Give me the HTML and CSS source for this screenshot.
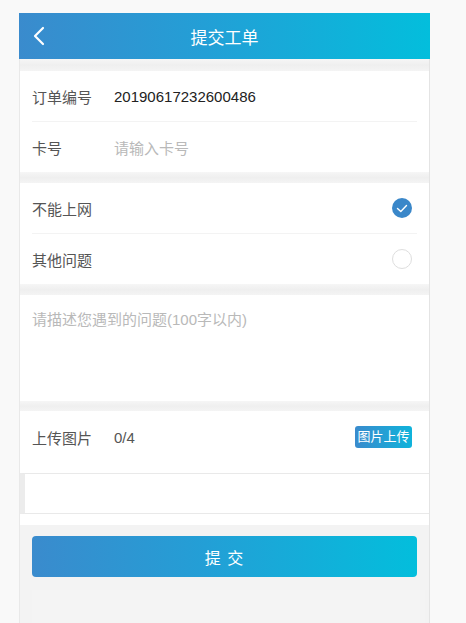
FILE: index.html
```html
<!DOCTYPE html>
<html lang="zh">
<head>
<meta charset="utf-8">
<title>提交工单</title>
<link rel="stylesheet" href="styles.css">
</head>
<body>
<div class="phone">
  <header class="topbar">
    <svg class="back" width="12" height="20" viewBox="0 0 12 20"><path d="M10 2 L2 10 L10 18" fill="none" stroke="#fff" stroke-width="2.2" stroke-linecap="round" stroke-linejoin="round"/></svg>
    <h1 class="title">提交工单</h1>
  </header>
  <div class="gap gap-first"></div>
  <section class="group">
    <div class="row">
      <span class="label">订单编号</span>
      <span class="value">20190617232600486</span>
    </div>
    <div class="row">
      <span class="label">卡号</span>
      <span class="placeholder">请输入卡号</span>
    </div>
  </section>
  <div class="gap"></div>
  <section class="group">
    <div class="row option">
      <span class="label">不能上网</span>
      <span class="radio checked">
        <svg width="20" height="20" viewBox="0 0 20 20"><path d="M5.5 10.5 L8.8 13.5 L14.5 7.5" fill="none" stroke="#fff" stroke-width="1.4" stroke-linecap="round" stroke-linejoin="round"/></svg>
      </span>
    </div>
    <div class="row option">
      <span class="label">其他问题</span>
      <span class="radio"></span>
    </div>
  </section>
  <div class="gap"></div>
  <section class="desc">
    <span class="placeholder">请描述您遇到的问题(100字以内)</span>
  </section>
  <div class="gap gap-small"></div>
  <section class="upload">
    <div class="upload-row">
      <span class="label">上传图片</span>
      <span class="count">0/4</span>
      <span class="upload-btn">图片上传</span>
    </div>
    <div class="pics"></div>
  </section>
  <div class="footer">
    <button class="submit">提 交</button>
    <div class="footer-fill"></div>
  </div>
</div>
</body>
</html>
```
FILE: styles.css
```css
html, body {
  margin: 0;
  padding: 0;
  background: #f9f9f9;
  font-family: "Liberation Sans", "Noto Sans CJK SC", sans-serif;
}
.phone {
  width: 411px;
  margin: 13px 0 0 19px;
  background: #fff;
  border-right: 1px solid #e4e4e4;
  border-left: 1px solid #e9e9e9;
  box-sizing: border-box;
  height: 610px;
  display: flex;
  flex-direction: column;
}
.topbar {
  height: 46px;
  flex: none;
  margin: 0 -1px;
  background: linear-gradient(90deg, #3a8bcd 0%, #239fd6 45%, #03bedc 100%);
  display: flex;
  align-items: center;
  justify-content: center;
  position: relative;
}
.back {
  position: absolute;
  left: 14px;
  top: 13px;
}
.title {
  margin: 0;
  color: #fff;
  font-size: 17px;
  font-weight: normal;
}
.gap {
  height: 11px;
  flex: none;
  background: linear-gradient(180deg, #f6f6f6 0%, #efefef 50%, #f4f4f4 100%);
}
.gap-first { height: 12px; }
.gap-small { height: 10px; }
.group {
  padding: 0 12px;
  flex: none;
}
.row {
  height: 50px;
  display: flex;
  align-items: center;
  border-bottom: 1px solid #f3f3f3;
  font-size: 15px;
}
.row:last-child { border-bottom: none; }
.label {
  color: #555;
  width: 82px;
  flex: none;
}
.value { color: #222; }
.placeholder { color: #b9b9b9; font-size: 15px; }
.option { justify-content: space-between; padding-right: 5px; }
.option .label { width: auto; }
.radio {
  width: 20px;
  height: 20px;
  border-radius: 50%;
  border: 1px solid #dedede;
  box-sizing: border-box;
  display: block;
}
.radio.checked {
  border: none;
  background: #3a87c9;
}
.radio svg { display: block; }
.desc {
  height: 106px;
  flex: none;
  padding: 13px 12px 0;
  box-sizing: border-box;
}
.upload { flex: none; }
.upload-row {
  height: 52px;
  display: flex;
  align-items: center;
  padding: 0 17px 0 12px;
  font-size: 15px;
}
.upload-row .label { width: 82px; }
.count { color: #555; flex: 1; }
.upload-btn {
  width: 57px;
  height: 22px;
  line-height: 22px;
  text-align: center;
  font-size: 13px;
  color: #fff;
  border-radius: 3px;
  background: linear-gradient(90deg, #3a8bcd, #0fb3db);
}
.pics {
  height: 41px;
  margin-top: 10px;
  border-top: 1px solid #e9e9e9;
  border-bottom: 1px solid #e9e9e9;
  border-left: 5px solid #ececec;
  box-sizing: border-box;
}
.footer {
  flex: 1;
  margin-top: 11px;
  background: #f3f3f3;
  padding: 11px 12px 0;
  display: flex;
  flex-direction: column;
}
.submit {
  height: 41px;
  width: 385px;
  border: none;
  border-radius: 4px;
  background: linear-gradient(90deg, #3a8bcd 0%, #239fd6 45%, #03bedc 100%);
  color: #fff;
  font-family: "Liberation Sans", "Noto Sans CJK SC", sans-serif;
  font-size: 16px;
  letter-spacing: 1px;
  padding: 0;
}
.footer-fill {
  flex: 1;
  margin: 13px -8px 0 0;
  background: #f4f4f4;
}
```
